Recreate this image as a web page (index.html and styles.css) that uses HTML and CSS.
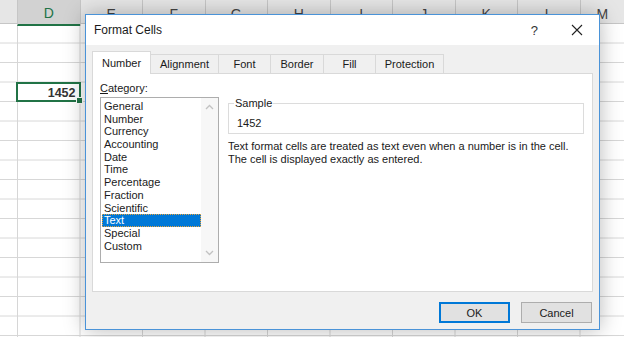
FILE: index.html
```
<!DOCTYPE html>
<html lang="en">
<head>
    <meta charset="UTF-8">
    <title>Format Cells</title>
    <link rel="stylesheet" href="styles.css">
</head>
<body>
    <div class="sheet">
        <div class="col-heads">
            <div class="corner"></div>
            <div class="head active">D</div>
            <div class="head">E</div>
            <div class="head">F</div>
            <div class="head">G</div>
            <div class="head">H</div>
            <div class="head">I</div>
            <div class="head">J</div>
            <div class="head">K</div>
            <div class="head">L</div>
            <div class="head">M</div>
        </div>
        <div class="cells">
            <div class="sel-cell">1452<span class="handle"></span></div>
        </div>
    </div>

    <div class="dialog">
        <div class="titlebar">
            <span class="title">Format Cells</span>
            <span class="help">?</span>
            <svg class="close" width="12" height="12" viewBox="0 0 12 12"><path d="M1 1 L11 11 M11 1 L1 11" stroke="#222" stroke-width="1.1"/></svg>
        </div>
        <div class="dlg-body">
            <div class="tabs">
                <div class="tab current">Number</div>
                <div class="tab">Alignment</div>
                <div class="tab">Font</div>
                <div class="tab">Border</div>
                <div class="tab">Fill</div>
                <div class="tab">Protection</div>
            </div>
            <div class="pane">
                <div class="left-col">
                    <div class="label"><u>C</u>ategory:</div>
                    <div class="listbox">
                        <ul class="items">
                            <li>General</li>
                            <li>Number</li>
                            <li>Currency</li>
                            <li>Accounting</li>
                            <li>Date</li>
                            <li>Time</li>
                            <li>Percentage</li>
                            <li>Fraction</li>
                            <li>Scientific</li>
                            <li class="picked">Text</li>
                            <li>Special</li>
                            <li>Custom</li>
                        </ul>
                        <div class="scrollbar">
                            <svg width="9" height="6" viewBox="0 0 9 6"><path d="M1 5 L4.5 1.5 L8 5" fill="none" stroke="#c2c2c2" stroke-width="1.3"/></svg>
                            <svg width="9" height="6" viewBox="0 0 9 6"><path d="M1 1 L4.5 4.5 L8 1" fill="none" stroke="#c2c2c2" stroke-width="1.3"/></svg>
                        </div>
                    </div>
                </div>
                <div class="right-col">
                    <fieldset class="sample">
                        <legend>Sample</legend>
                        <div class="sample-val">1452</div>
                    </fieldset>
                    <p class="desc">Text format cells are treated as text even when a number is in the cell.<br>The cell is displayed exactly as entered.</p>
                </div>
            </div>
            <div class="buttons">
                <button class="btn default">OK</button>
                <button class="btn">Cancel</button>
            </div>
        </div>
    </div>
</body>
</html>
```

FILE: styles.css
```
body {
    margin: 0;
    width: 624px;
    height: 337px;
    overflow: hidden;
    position: relative;
    background: white;
    font-family: 'Liberation Sans', sans-serif;
}
.sheet {
    width: 624px;
    height: 337px;
}
.col-heads {
    display: grid;
    grid-template-columns: 17px repeat(9, 62.5px) 1fr;
    height: 24px;
    background: #e6e6e6;
    border-bottom: 1px solid #c6c6c6;
    box-sizing: border-box;
}
.head {
    font-size: 14px;
    color: #444;
    text-align: center;
    line-height: 24px;
    padding-top: 2px;
    box-sizing: border-box;
    border-left: 1px solid #c6c6c6;
}
.head.active {
    background: #d2d2d2;
    color: #217346;
    border-bottom: 2px solid #217346;
    line-height: 22px;
}
.cells {
    display: grid;
    grid-template-columns: 17px 63.5px 1fr;
    grid-template-rows: repeat(16, 19.5px);
    height: 313px;
    background-image:
        linear-gradient(to right, #d6d6d6 1px, transparent 1px),
        linear-gradient(to bottom, transparent 18.5px, #d6d6d6 18.5px);
    background-size: 62.5px 100%, 100% 19.5px;
    background-position: 17px 0, 0 0;
}
.sel-cell {
    grid-column: 2;
    grid-row: 4;
    position: relative;
    margin-left: -1px;
    margin-top: -1px;
    border: 2px solid #217346;
    font-weight: bold;
    font-size: 12.5px;
    color: #333;
    text-align: right;
    padding-right: 3px;
    line-height: 18px;
    background: white;
}
.handle {
    position: absolute;
    right: -4px;
    bottom: -4px;
    width: 5px;
    height: 5px;
    background: #217346;
    border: 1px solid white;
}

.dialog {
    position: absolute;
    left: 85px;
    top: 14px;
    width: 515px;
    height: 316px;
    box-sizing: border-box;
    border: 1px solid #4a93d8;
    background: #f0f0f0;
    box-shadow: 0 0 20px rgba(0, 0, 0, 0.28);
    font-size: 11px;
    color: #1a1a1a;
    display: flex;
    flex-direction: column;
}
.titlebar {
    height: 30px;
    background: white;
    display: flex;
    align-items: center;
    padding-left: 8px;
    font-size: 12px;
}
.title {
    flex: 1;
}
.help {
    font-size: 13px;
    color: #333;
    margin-right: 33px;
}
.close {
    margin-right: 16px;
}
.dlg-body {
    flex: 1;
    padding: 6px 6px 0 6px;
    display: flex;
    flex-direction: column;
}
.tabs {
    display: flex;
    align-items: flex-end;
    height: 22px;
}
.tab {
    height: 19px;
    box-sizing: border-box;
    border: 1px solid #d9d9d9;
    border-bottom: none;
    margin-left: -1px;
    text-align: center;
    line-height: 18px;
    background: #f0f0f0;
}
.tab:nth-child(2) { width: 69px; }
.tab:nth-child(3) { width: 53px; }
.tab:nth-child(4) { width: 54px; }
.tab:nth-child(5) { width: 53px; }
.tab:nth-child(6) { width: 69px; }
.tab.current {
    height: 23px;
    width: 59px;
    margin-left: 0;
    background: white;
    line-height: 22px;
    position: relative;
    z-index: 1;
    margin-bottom: -1px;
}
.pane {
    width: 501px;
    height: 219px;
    box-sizing: border-box;
    background: white;
    border: 1px solid #d9d9d9;
    display: flex;
    padding: 7px 8px 0 7px;
    gap: 9px;
}
.left-col {
    width: 119px;
}
.label {
    height: 16px;
    line-height: 14px;
}
.listbox {
    height: 166px;
    box-sizing: border-box;
    border: 1px solid #adadad;
    display: flex;
}
.items {
    list-style: none;
    margin: 0;
    padding: 2px 0 0 1px;
    flex: 1;
}
.items li {
    height: 12.7px;
    line-height: 12.7px;
    padding-left: 2px;
}
.items li.picked {
    background: #0078d7;
    color: white;
    outline: 1px dotted #e8a33c;
    outline-offset: -1px;
}
.scrollbar {
    width: 17px;
    background: #f7f7f7;
    display: flex;
    flex-direction: column;
    justify-content: space-between;
    align-items: center;
    padding: 6px 0;
}
.right-col {
    flex: 1;
    padding-top: 16px;
}
.sample {
    margin: 0;
    padding: 6px 6px 0 7px;
    border: 1px solid #dcdcdc;
    height: 37px;
    box-sizing: border-box;
}
.sample legend {
    padding: 0 1px;
    margin-left: -2px;
    line-height: 12px;
}
.sample-val {
    line-height: 16px;
    padding-left: 1px;
    margin-top: -6px;
    padding-top: 6px;
}
.desc {
    margin: 6px 0 0 0;
    line-height: 12.5px;
    white-space: nowrap;
}
.buttons {
    display: flex;
    justify-content: flex-end;
    gap: 11px;
    padding-top: 10px;
    padding-right: 1px;
}
.btn {
    width: 71px;
    height: 21px;
    font-family: 'Liberation Sans', sans-serif;
    font-size: 11px;
    color: #1a1a1a;
    background: #e1e1e1;
    border: 1px solid #adadad;
    padding: 0;
}
.btn.default {
    border: 2px solid #0078d7;
}
```
